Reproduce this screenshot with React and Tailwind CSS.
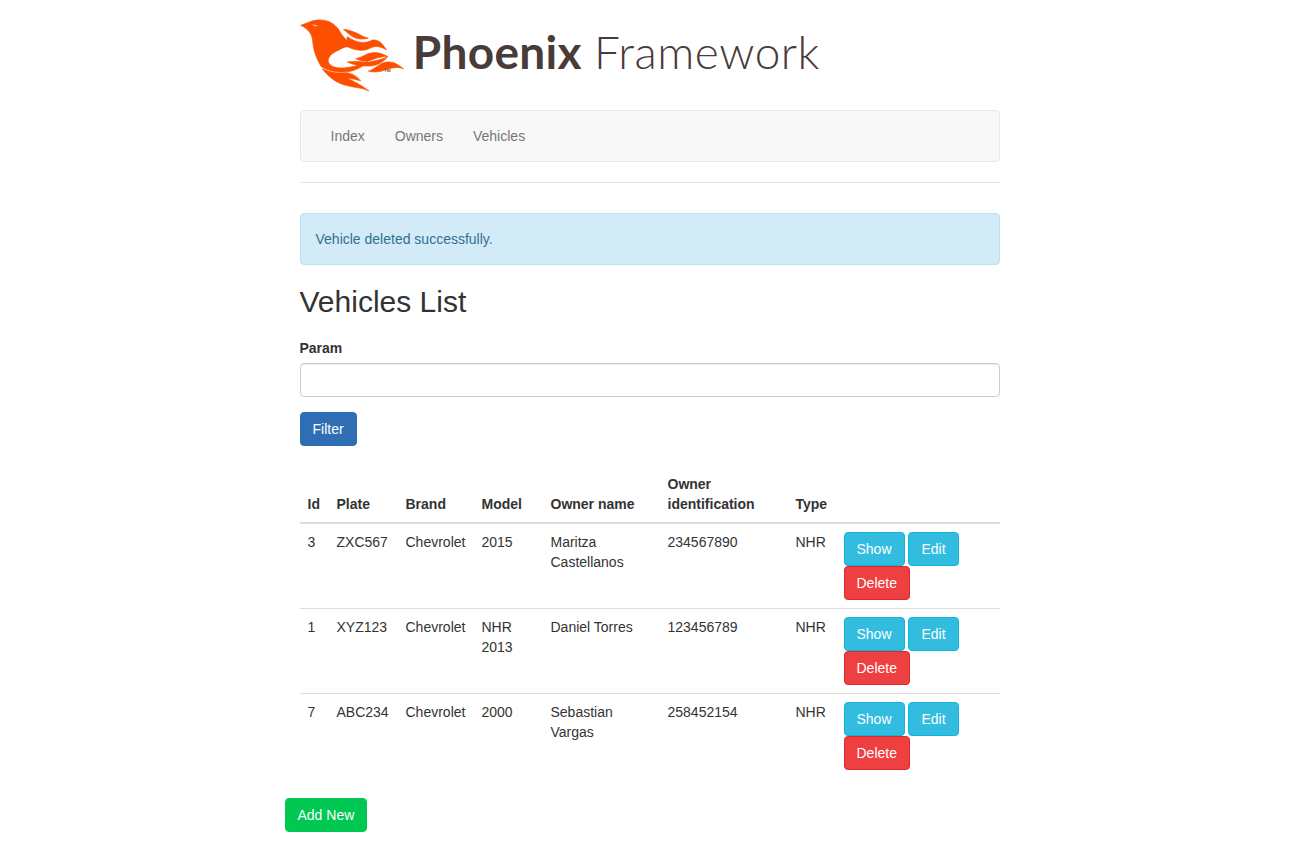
const Sans = '"Liberation Sans", Arial, sans-serif';

function Bird() {
  return (
    <svg viewBox="8 0 328 234" className="w-[109.33px] h-[78px] shrink-0" fill="#fd4f00" stroke="#fd4f00" strokeWidth="2" strokeLinejoin="round">
      <path fillRule="evenodd" d="M10 28 C28 22 40 14 62 12 C90 10 112 22 125 42 C135 60 150 78 172 92 C155 90 140 92 125 102 C102 112 90 125 93 138 C97 150 115 157 135 156 C160 154 185 150 212 136 C195 155 165 170 130 168 C110 168 90 162 72 152 C55 125 48 100 46 75 C44 55 35 40 10 28Z M42 26 C50 25 58 27 64 30 C56 32 48 30 42 26Z" />
      <path d="M75 158 C100 170 120 172 145 170 C165 172 178 180 190 195 C170 188 160 188 150 186 C165 195 190 205 215 225 C195 215 170 215 145 208 C115 200 90 180 75 158Z" />
      <path d="M150 62 C175 80 205 85 225 72 C245 70 258 85 267 102 C250 90 232 88 215 98 C195 108 170 102 145 90Z" />
      <path d="M138 40 C160 42 180 52 195 60 C202 64 208 65 213 66 C195 72 175 70 160 58 C152 52 145 46 138 40Z" />
      <path d="M175 128 C195 125 205 112 225 110 C245 108 258 115 272 122 C250 120 235 128 220 133 C205 138 190 135 175 128Z" />
      <path d="M150 138 C180 133 195 140 215 138 C235 135 250 130 270 124 C255 140 235 152 212 150 C195 150 170 148 150 138Z" />
      <path d="M213 165 C235 160 245 140 270 138 C290 136 305 148 318 158 C300 152 285 155 270 160 C250 168 230 170 213 165Z" />
      <text x="261" y="168" fontSize="13" fontWeight="700" fill="#8a4a3a" stroke="none" fontFamily="Liberation Sans">TM</text>
    </svg>
  );
}

function Btn({ className, children }) {
  return (
    <a className={`inline-block h-[34px] px-3 leading-[32px] text-sm text-white text-center rounded border ${className}`}>
      {children}
    </a>
  );
}

const rows = [
  ["3", "ZXC567", "Chevrolet", "2015", "Maritza Castellanos", "234567890", "NHR"],
  ["1", "XYZ123", "Chevrolet", "NHR 2013", "Daniel Torres", "123456789", "NHR"],
  ["7", "ABC234", "Chevrolet", "2000", "Sebastian Vargas", "258452154", "NHR"],
];

const th = "p-2 pt-2 text-left align-bottom font-bold border-b-2 border-[#ddd]";
const td = "p-2 align-top";

export default function App() {
  return (
    <div className="mx-auto w-[730px] min-h-[852px] text-sm leading-5 text-[#333]" style={{ fontFamily: Sans }}>
      <div className="px-[15px]">
        <header className="flex items-center h-[110px]">
          <Bird />
          <div className="flex items-baseline ml-[4px] -mt-[7px] text-[#4a3b3b] whitespace-nowrap font-['Lato',sans-serif]">
            <span className="text-[46px] leading-none font-bold tracking-[0.3px]">Phoenix</span>
            <span className="text-[46px] leading-none font-light ml-[12px] tracking-[0.5px]">Framework</span>
          </div>
        </header>

        <nav className="h-[52px] flex items-center bg-[#f8f8f8] border border-[#e7e7e7] rounded">
          {["Index", "Owners", "Vehicles"].map((n) => (
            <a key={n} className={`px-[15px] text-[#777] ${n === "Index" ? "ml-[15px]" : ""}`}>{n}</a>
          ))}
        </nav>

        <hr className="mt-5 mb-[30px] border-t border-[#e5e5e5]" />

        <div className="h-[52px] flex items-center px-[15px] bg-[#d3ebf7] border border-[#b5e5f1] rounded text-[#31708f]">
          Vehicle deleted successfully.
        </div>

        <h2 className="mt-5 mb-[10px] text-[30px] leading-[33px] font-medium">Vehicles List</h2>

        <label className="block mt-[20px] mb-[5px] font-bold">Param</label>
        <input className="block w-full h-[34px] px-3 border border-[#ccc] rounded bg-white shadow-[inset_0_1px_1px_rgba(0,0,0,0.075)]" />
        <div className="mt-[15px]">
          <Btn className="bg-[#2f6db5] border-[#2e6da4]">Filter</Btn>
        </div>

        <table className="w-full mt-5 border-collapse">
          <thead>
            <tr>
              <th className={`${th} w-[29px]`}>Id</th>
              <th className={`${th} w-[69px]`}>Plate</th>
              <th className={`${th} w-[76px]`}>Brand</th>
              <th className={`${th} w-[69px]`}>Model</th>
              <th className={`${th} w-[117px]`}>Owner name</th>
              <th className={`${th} w-[128px]`}>Owner identification</th>
              <th className={`${th} w-[48px]`}>Type</th>
              <th className={th}></th>
            </tr>
          </thead>
          <tbody>
            {rows.map((r, i) => (
              <tr key={r[0]} className={i ? "border-t border-[#ddd]" : ""}>
                {r.map((c, j) => (
                  <td key={j} className={td}>{c}</td>
                ))}
                <td className={td}>
                  <div className="flex flex-wrap gap-x-[3.89px]">
                    <Btn className="bg-[#31bce0] border-[#10b5dc]">Show</Btn>
                    <Btn className="bg-[#31bce0] border-[#10b5dc]">Edit</Btn>
                    <Btn className="bg-[#ee4040] border-[#dc2828]">Delete</Btn>
                  </div>
                </td>
              </tr>
            ))}
          </tbody>
        </table>
      </div>
      <div className="mt-5">
        <Btn className="bg-[#00c853] border-[#00c853]">Add New</Btn>
      </div>
    </div>
  );
}
